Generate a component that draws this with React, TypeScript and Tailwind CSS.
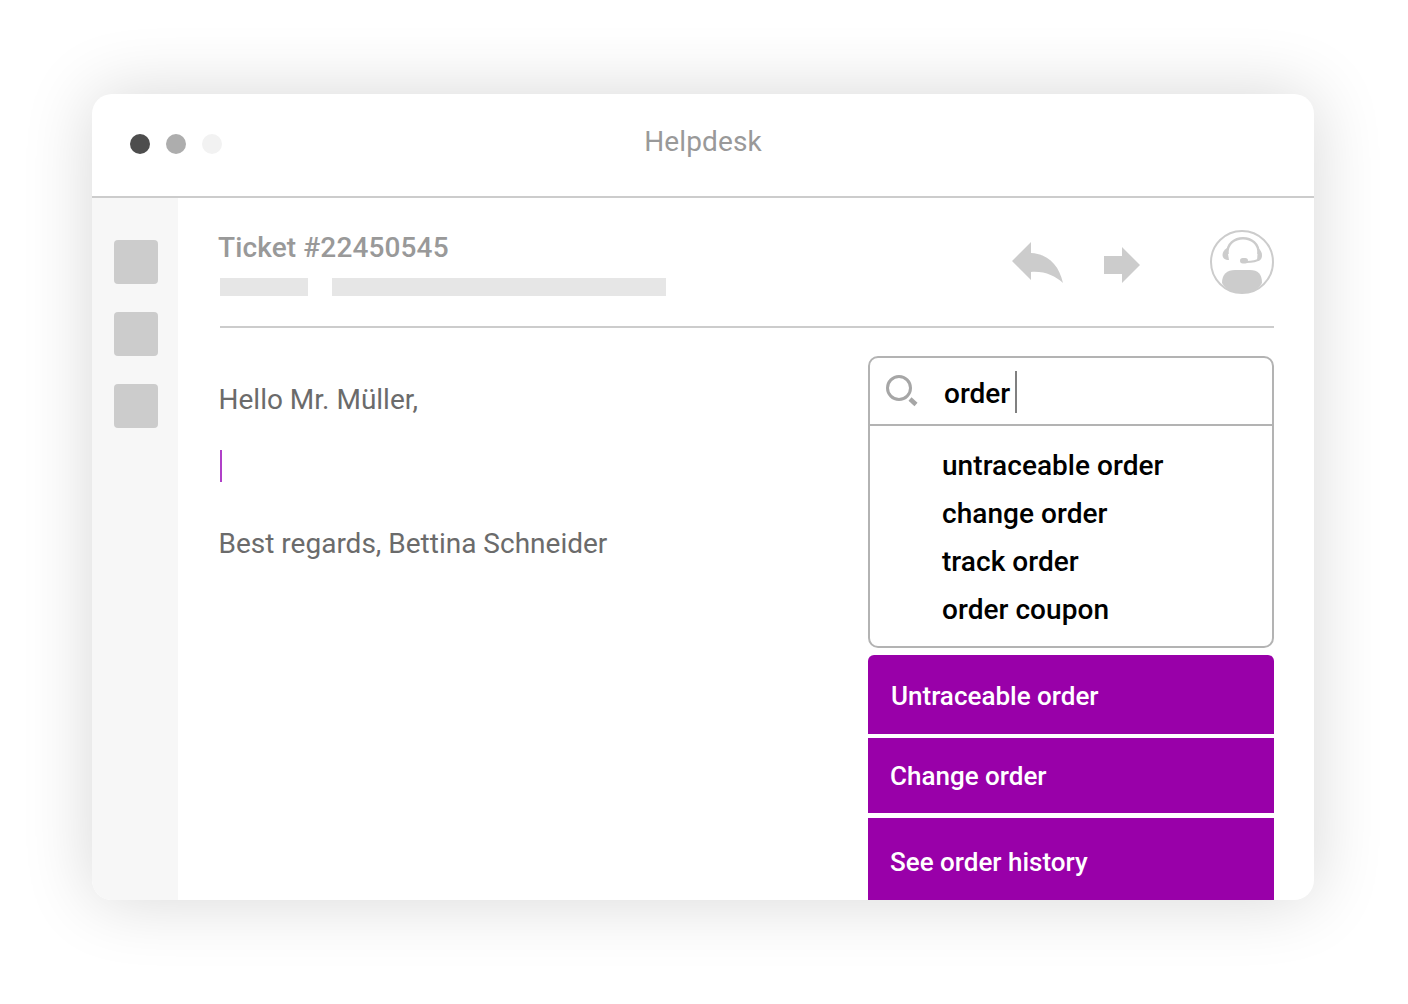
const replies = ["Untraceable order", "Change order", "See order history"];
const suggestions = ["untraceable order", "change order", "track order", "order coupon"];

function ReplyIcon() {
  return (
    <svg width="52" height="44" viewBox="0 0 52 44" className="block">
      <path d="M0 21 L19 2 V13 C36 14 47 25 51 43 C43 36 33 31 19 32 V40 Z" fill="#cccccc" />
    </svg>
  );
}

function ForwardIcon() {
  return (
    <svg width="36" height="36" viewBox="0 0 36 36" className="block">
      <path d="M0 9 H18 V0 L36 18 L18 36 V27 H0 Z" fill="#cccccc" />
    </svg>
  );
}

function AgentIcon() {
  return (
    <svg width="64" height="64" viewBox="0 0 64 64" className="block">
      <circle cx="32" cy="32" r="31" fill="none" stroke="#cccccc" strokeWidth="2" />
      <path d="M17.5 24 C16 3 50 3 48.5 24" fill="none" stroke="#cccccc" strokeWidth="2.5" />
      <path d="M17 18 C14 20 12.5 22 12.5 25 C12.5 28 15 30 19 30 Z" fill="#cccccc" />
      <path d="M48 18 C50.5 20 52 22 52 25 C52 29 50 31 47 31 Z" fill="#cccccc" />
      <path d="M49 29 C47 31 43 32 36 32" fill="none" stroke="#cccccc" strokeWidth="2" />
      <rect x="30" y="28" width="8" height="5.5" rx="2.75" fill="#cccccc" />
      <path d="M12 53 C12 44 17 40 25 40 H40 C48 40 52 44 52 53 C48 60 40 63 32 63 C24 63 16 60 12 53 Z" fill="#cccccc" />
    </svg>
  );
}

function SearchIcon() {
  return (
    <svg width="32" height="32" viewBox="0 0 32 32" className="block">
      <circle cx="13" cy="13" r="11.5" fill="none" stroke="#a6a6a6" strokeWidth="3" />
      <path d="M24 24 L30 29.5" stroke="#a6a6a6" strokeWidth="4.5" />
    </svg>
  );
}

export default function App() {
  return (
    <div className="h-[1004px] w-[1408px] overflow-hidden bg-white pt-[94px] pl-[92px] font-['Roboto',sans-serif]">
      <div className="flex h-[806px] w-[1222px] flex-col overflow-hidden rounded-[20px] bg-white shadow-[0_0_70px_rgba(0,0,0,0.16)]">
        {/* Title bar */}
        <div className="relative flex h-[104px] shrink-0 items-center gap-[16px] border-b-2 border-[#cccccc] pl-[38px] pb-[2px]">
          <div className="h-5 w-5 rounded-full bg-[#4d4d4d]" />
          <div className="h-5 w-5 rounded-full bg-[#adadad]" />
          <div className="h-5 w-5 rounded-full bg-[#f2f2f2]" />
          <div className="absolute top-[31px] left-0 w-full text-center text-[28px] leading-[34px] tracking-[0.12px] text-[#999999]">
            Helpdesk
          </div>
        </div>

        <div className="flex min-h-0 flex-1">
          {/* Sidebar */}
          <div className="flex w-[86px] shrink-0 flex-col gap-[28px] bg-[#f7f7f7] pt-[42px] pl-[22px]">
            <div className="h-11 w-11 rounded-[4px] bg-[#cccccc]" />
            <div className="h-11 w-11 rounded-[4px] bg-[#cccccc]" />
            <div className="h-11 w-11 rounded-[4px] bg-[#cccccc]" />
          </div>

          {/* Main */}
          <div className="flex min-w-0 flex-1 flex-col pr-[40px] pl-[42px]">
            <div className="flex h-[130px] shrink-0 border-b-2 border-[#cccccc]">
              <div className="flex-1 pt-[32px]">
                <div className="-ml-[2px] text-[28px] leading-[36px] font-medium tracking-[0.13px] text-[#999999]">Ticket #22450545</div>
                <div className="mt-[12px] flex gap-[24px]">
                  <div className="h-[18px] w-[88px] bg-[#e6e6e6]" />
                  <div className="h-[18px] w-[334px] bg-[#e6e6e6]" />
                </div>
              </div>
              <div className="flex items-start pt-[32px]">
                <div className="mt-[10px]"><ReplyIcon /></div>
                <div className="mt-[17px] ml-[40px]"><ForwardIcon /></div>
                <div className="ml-[70px]"><AgentIcon /></div>
              </div>
            </div>

            <div className="flex min-h-0 flex-1 justify-between">
              {/* Message */}
              <div className="-ml-[1.5px] pt-[54px] text-[28px] leading-[36px] text-[#6b6b6b]">
                <div>Hello Mr. Müller,</div>
                <div className="mt-[32px] ml-[1.5px] h-[32px] w-[2px] bg-[#b040c8]" />
                <div className="mt-[44px]">Best regards, Bettina Schneider</div>
              </div>

              {/* Search panel */}
              <div className="w-[406px] shrink-0 pt-[28px]">
                <div className="h-[292px] overflow-hidden rounded-[10px] border-2 border-[#b3b3b3]">
                  <div className="flex h-[68px] items-center border-b-2 border-[#b3b3b3] pl-[16px]">
                    <SearchIcon />
                    <span className="mt-[6px] ml-[26px] text-[28px] leading-[36px] font-medium text-black">order</span>
                    <div className="mt-[2px] ml-[5px] h-[42px] w-[2px] bg-[#808080]" />
                  </div>
                  <div className="pt-[16px] pl-[72px]">
                    {suggestions.map((s) => (
                      <div key={s} className="h-[48px] text-[28px] leading-[48px] font-medium tracking-[0.05px] text-black">{s}</div>
                    ))}
                  </div>
                </div>

                <div className="mt-[7px] flex flex-col">
                  <div className="flex h-[79px] items-center rounded-t-[6px] bg-[#9900a9] pt-[4px] pl-[23px] text-[26px] font-medium text-white">
                    {replies[0]}
                  </div>
                  <div className="mt-[4px] flex h-[75px] items-center bg-[#9900a9] pt-[2px] pl-[22px] text-[26px] font-medium text-white">
                    {replies[1]}
                  </div>
                  <div className="mt-[5px] flex h-[88px] items-center bg-[#9900a9] pl-[22px] text-[26px] font-medium text-white">
                    {replies[2]}
                  </div>
                </div>
              </div>
            </div>
          </div>
        </div>
      </div>
    </div>
  );
}
